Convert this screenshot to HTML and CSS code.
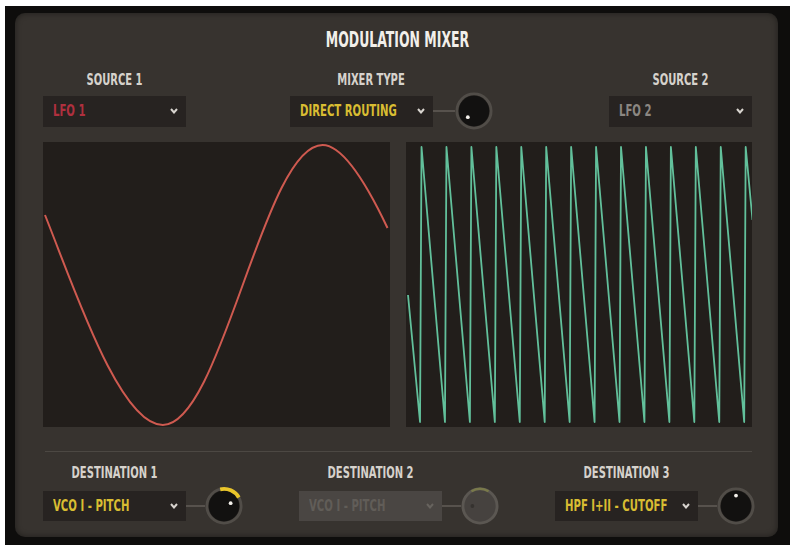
FILE: index.html
```html
<!DOCTYPE html>
<html lang="en">
<head>
    <meta charset="UTF-8">
    <meta name="viewport" content="width=device-width, initial-scale=1.0">
    <title>Modulation Mixer</title>
    <link rel="stylesheet" href="styles.css">
</head>
<body>
    <div class="frame">
        <div class="panel">
            <div class="title">MODULATION MIXER</div>

            <div class="top">
                <div class="group">
                    <div class="label">SOURCE 1</div>
                    <div class="ctl-row">
                        <div class="select red">
                            <span>LFO 1</span>
                            <svg class="chev" viewBox="0 0 8 6"><polyline points="1,1 4,4.5 7,1"/></svg>
                        </div>
                    </div>
                </div>

                <div class="group mixer">
                    <div class="label">MIXER TYPE</div>
                    <div class="ctl-row">
                        <div class="select yellow">
                            <span>DIRECT ROUTING</span>
                            <svg class="chev" viewBox="0 0 8 6"><polyline points="1,1 4,4.5 7,1"/></svg>
                        </div>
                        <span class="wire"></span>
                        <svg class="knob" viewBox="0 0 40 40">
                            <circle class="ring" cx="20" cy="20" r="18"/>
                            <circle class="cap" cx="20" cy="20" r="16"/>
                            <circle class="dot" cx="13.5" cy="26.5" r="2"/>
                        </svg>
                    </div>
                </div>

                <div class="group source2">
                    <div class="label">SOURCE 2</div>
                    <div class="ctl-row">
                        <div class="select grey">
                            <span>LFO 2</span>
                            <svg class="chev" viewBox="0 0 8 6"><polyline points="1,1 4,4.5 7,1"/></svg>
                        </div>
                    </div>
                </div>
            </div>

            <div class="scopes">
                <div class="scope">
                    <svg viewBox="43 142 347 285" preserveAspectRatio="none">
                        <path class="sine" d="M45,215 C75,290 120,425 163,425 C192,425 217,357 243,285 C269,213 294,145 323,145 C345,145 370,190 388,228"/>
                    </svg>
                </div>
                <div class="scope">
                    <svg viewBox="406 142 346 285" preserveAspectRatio="none">
                        <polyline class="saw" points="408,295 420,422 421.5,147 444.9,422 446.4,147 469.8,422 471.3,147 494.7,422 496.2,147 519.6,422 521.1,147 544.5,422 546,147 569.4,422 570.9,147 594.3,422 595.8,147 619.2,422 620.7,147 644.1,422 645.6,147 669,422 670.5,147 693.9,422 695.4,147 718.8,422 720.3,147 743.7,422 745.2,147 752,220"/>
                    </svg>
                </div>
            </div>

            <div class="divider"></div>

            <div class="bottom">
                <div class="group">
                    <div class="label">DESTINATION 1</div>
                    <div class="ctl-row">
                        <div class="select yellow">
                            <span>VCO I - PITCH</span>
                            <svg class="chev" viewBox="0 0 8 6"><polyline points="1,1 4,4.5 7,1"/></svg>
                        </div>
                        <span class="wire"></span>
                        <svg class="knob" viewBox="0 0 40 40">
                            <circle class="ring" cx="20" cy="20" r="18"/>
                            <circle class="cap" cx="20" cy="20" r="16"/>
                            <path class="arc" d="M16,2.5 A18,18 0 0 1 35.6,11"/>
                            <circle class="dot" cx="27" cy="17" r="2"/>
                        </svg>
                    </div>
                </div>

                <div class="group off">
                    <div class="label">DESTINATION 2</div>
                    <div class="ctl-row">
                        <div class="select">
                            <span>VCO I - PITCH</span>
                            <svg class="chev" viewBox="0 0 8 6"><polyline points="1,1 4,4.5 7,1"/></svg>
                        </div>
                        <span class="wire"></span>
                        <svg class="knob" viewBox="0 0 40 40">
                            <circle class="ring" cx="20" cy="20" r="18"/>
                            <circle class="cap" cx="20" cy="20" r="16"/>
                            <path class="arc" d="M11,4.4 A18,18 0 0 1 29,4.4"/>
                            <circle class="dot" cx="12" cy="20" r="2"/>
                        </svg>
                    </div>
                </div>

                <div class="group">
                    <div class="label">DESTINATION 3</div>
                    <div class="ctl-row">
                        <div class="select yellow">
                            <span>HPF I+II - CUTOFF</span>
                            <svg class="chev" viewBox="0 0 8 6"><polyline points="1,1 4,4.5 7,1"/></svg>
                        </div>
                        <span class="wire"></span>
                        <svg class="knob" viewBox="0 0 40 40">
                            <circle class="ring" cx="20" cy="20" r="18"/>
                            <circle class="cap" cx="20" cy="20" r="16"/>
                            <circle class="dot" cx="20" cy="9" r="2"/>
                        </svg>
                    </div>
                </div>
            </div>
        </div>
    </div>
</body>
</html>
```

FILE: styles.css
```css
body {
    margin: 0;
    background-color: white;
    font-family: "DejaVu Sans Condensed", "Liberation Sans", sans-serif;
    font-weight: bold;
}

.frame {
    margin: 6px 0 0 5px;
    height: 539px;
    box-sizing: border-box;
    padding: 7px 12px 8px 10px;
    background-color: #0e0d0c;
}

.panel {
    height: 524px;
    box-sizing: border-box;
    padding: 16px 26px 0 28px;
    border-radius: 10px;
    background-color: #37332f;
    box-shadow: inset 0 0 6px rgba(0, 0, 0, 0.45);
}

/* the font on the hardware is a tall condensed one, so squeeze ours */
.title {
    text-align: center;
    font-size: 21px;
    line-height: 22px;
    color: #f2efea;
    margin-bottom: 21px;
    transform: scaleX(0.66);
}

.label {
    font-size: 15px;
    line-height: 16px;
    color: #d6d2cc;
    text-align: center;
    margin-bottom: 4px;
    transform: scaleX(0.74);
}

.top {
    display: flex;
}

.group {
    display: flex;
    flex-direction: column;
}

.group .label {
    width: 143px;
}

.mixer {
    margin-left: 104px;
}

.mixer .label {
    width: 162px;
}

.source2 {
    margin-left: auto;
}

.ctl-row {
    display: flex;
    align-items: center;
    height: 38px;
}

.select {
    width: 143px;
    height: 31px;
    box-sizing: border-box;
    padding: 0 8px 0 10px;
    display: flex;
    align-items: center;
    background-color: #272321;
    font-size: 15px;
}

.select span {
    flex: 1;
    min-width: 0;
    white-space: nowrap;
    transform: scaleX(0.75);
    transform-origin: left center;
}

.select.red { color: #b0303f; }
.select.yellow { color: #d9bd32; }
.select.grey { color: #8c8782; }

.chev {
    flex: none;
    width: 8px;
    height: 6px;
    fill: none;
    stroke: #d8d4cf;
    stroke-width: 2;
}

.wire {
    width: 22px;
    height: 2px;
    background-color: #57524d;
}

.knob {
    width: 38px;
    height: 38px;
}

.knob .ring {
    fill: #2a2724;
    stroke: #514d48;
    stroke-width: 3;
}

.knob .cap {
    fill: #121110;
}

.knob .dot {
    fill: #f4f1ec;
}

.knob .arc {
    fill: none;
    stroke: #e9c52a;
    stroke-width: 4;
}

.scopes {
    display: flex;
    gap: 16px;
    margin-top: 12px;
    height: 285px;
}

.scope {
    flex: 1;
    background-color: #221e1b;
}

.scope svg {
    display: block;
    width: 100%;
    height: 100%;
}

.sine {
    fill: none;
    stroke: #cf5a50;
    stroke-width: 2;
}

.saw {
    fill: none;
    stroke: #62c09b;
    stroke-width: 1.8;
    stroke-linejoin: round;
}

.divider {
    height: 1px;
    margin: 24px 0 0 2px;
    background-color: #4c4843;
}

.bottom {
    display: flex;
    gap: 56px;
    margin-top: 13px;
}

.bottom .label {
    margin-bottom: 6px;
}

.bottom .select {
    height: 30px;
}

.bottom .wire {
    width: 19px;
}

.off .select {
    background-color: #4a4643;
    color: #615d58;
}

.off .chev {
    stroke: #67635e;
}

.off .knob .ring {
    fill: #4a4643;
    stroke: #5b5752;
}

.off .knob .cap {
    fill: #46423f;
}

.off .knob .dot {
    fill: #35322f;
}

.off .knob .arc {
    stroke: #79794a;
    stroke-width: 2.5;
}
```
